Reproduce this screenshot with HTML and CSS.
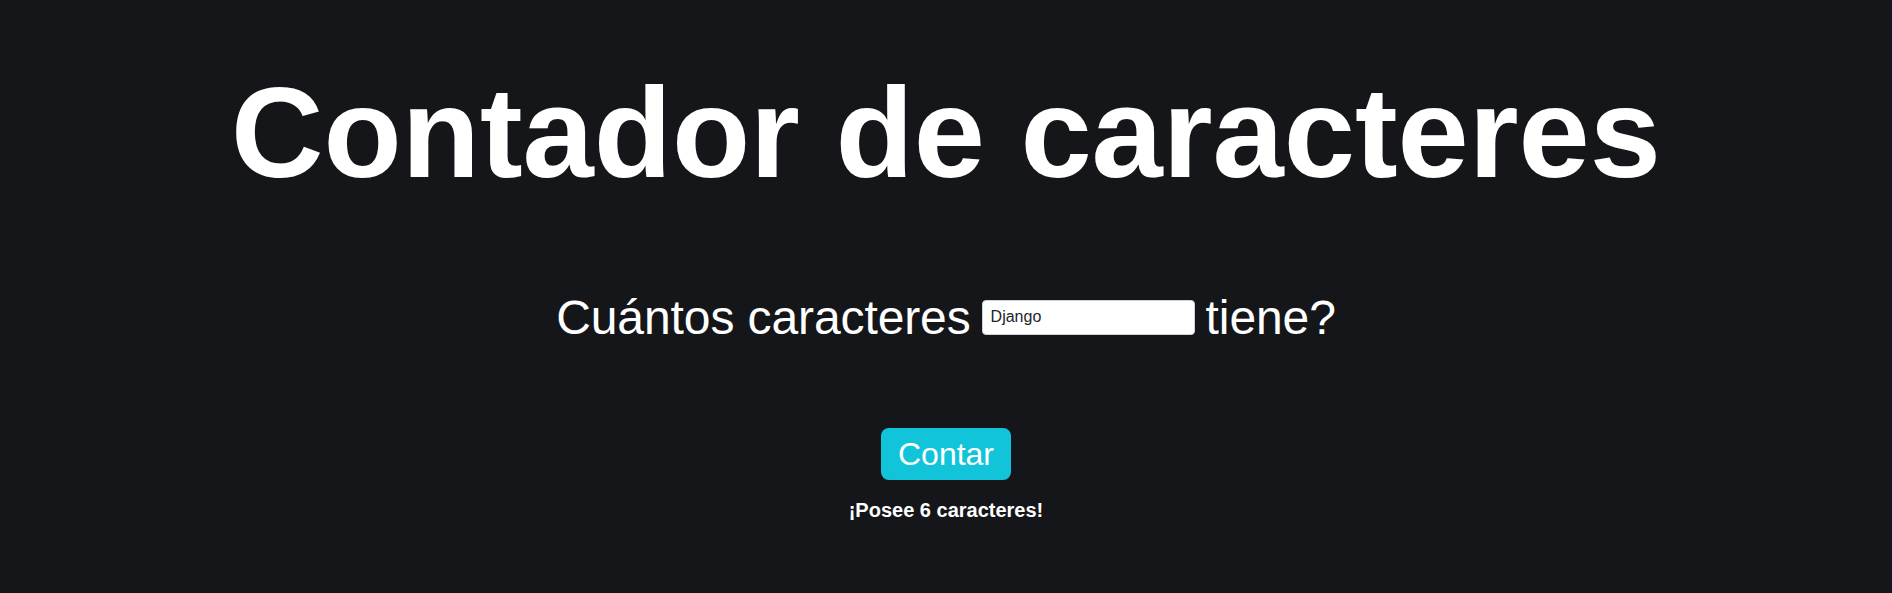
FILE: index.html
```html
<!DOCTYPE html>
<html lang="es">
<head>
<meta charset="utf-8">
<title>Contador de caracteres</title>
<link rel="stylesheet" href="styles.css">
</head>
<body>
<main class="page">
  <h1 class="title">Contador de caracteres</h1>
  <form class="counter">
    <div class="question">
      <span class="question-text">Cuántos caracteres</span>
      <input class="word-input" type="text" value="Django">
      <span class="question-text">tiene?</span>
    </div>
    <button class="count-btn" type="button">Contar</button>
    <p class="result">¡Posee 6 caracteres!</p>
  </form>
</main>
</body>
</html>
```

FILE: styles.css
```css
html, body {
  margin: 0;
  padding: 0;
  background: #151619;
  color: #ffffff;
  font-family: "Liberation Sans", Arial, sans-serif;
}

.page {
  height: 593px;
  padding-top: 56px;
  box-sizing: border-box;
  text-align: center;
}

.title {
  margin: 0;
  font-size: 128px;
  font-weight: 700;
  line-height: 1.2;
}

.counter {
  display: flex;
  flex-direction: column;
  align-items: center;
  margin-top: 80px;
}

.question {
  display: flex;
  align-items: center;
  justify-content: center;
  gap: 11px;
}

.question-text {
  font-size: 48px;
  line-height: normal;
  letter-spacing: -0.1px;
}

.word-input {
  width: 213px;
  height: 35px;
  box-sizing: border-box;
  padding: 0 8px;
  border: 1px solid #d0d3d6;
  border-radius: 4px;
  background: #ffffff;
  color: #212529;
  font-family: "Liberation Sans", Arial, sans-serif;
  font-size: 16px;
}

.count-btn {
  margin-top: 83px;
  padding: 8px 17px;
  border: none;
  border-radius: 8px;
  background: #11c4da;
  color: #ffffff;
  font-family: "Liberation Sans", Arial, sans-serif;
  font-size: 32px;
  line-height: 1.15;
  cursor: pointer;
}

.result {
  margin: 19px 0 0;
  font-size: 20px;
  font-weight: 700;
  line-height: normal;
}
```
